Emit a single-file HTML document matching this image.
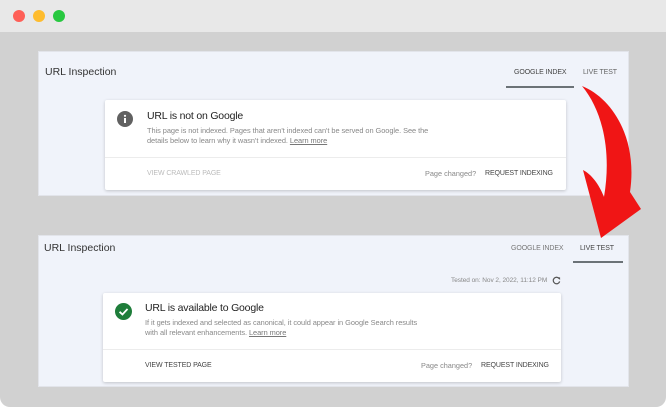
<!DOCTYPE html>
<html><head><style>
*{margin:0;padding:0;box-sizing:border-box}
body{width:666px;height:407px;background:#fff;font-family:"Liberation Sans",sans-serif;overflow:hidden;position:relative}
.win{position:absolute;left:0;top:0;width:666px;height:407px;background:#d1d1d1;border-radius:0 0 10px 10px;overflow:hidden}
.bar{position:absolute;left:0;top:0;width:666px;height:32px;background:#e8e8e8}
.dot{position:absolute;top:10px;width:12px;height:12px;border-radius:50%}
.panel{position:absolute;left:38px;width:591px;background:#f0f3fa;border:1px solid #e2e4ea}
.t{position:absolute;font-size:10.5px;color:#333}
.tab{position:absolute;font-size:7px;color:#555;letter-spacing:-.1px;line-height:9px}
.ul{position:absolute;height:2px;background:#6b7277}
.card{position:absolute;background:#fff;box-shadow:0 1px 3px rgba(0,0,0,.2);border-radius:2px}
.h{position:absolute;font-size:10.5px;color:#222;letter-spacing:-.2px}
.p{position:absolute;font-size:7.4px;color:#888;line-height:10px;letter-spacing:-.05px}
.p u{color:#777}
.div{position:absolute;left:0;right:0;height:1px;background:#ececec}
.btn{position:absolute;font-size:7px;color:#555;letter-spacing:-.1px;line-height:9px}
</style></head><body>
<div class="win">
<div class="bar"></div>
<div class="dot" style="left:13px;background:#fe5f57"></div>
<div class="dot" style="left:33px;background:#febc2e"></div>
<div class="dot" style="left:53px;background:#28c840"></div>

<div class="panel" style="top:51px;height:145px">
 <div class="t" style="left:6px;top:14px">URL Inspection</div>
 <div class="tab" style="left:475px;top:16px;color:#444">GOOGLE INDEX</div>
 <div class="tab" style="left:544px;top:16px;color:#666">LIVE TEST</div>
 <div class="ul" style="left:467px;top:34px;width:68px"></div>
 <div class="card" style="left:66px;top:48px;width:461px;height:90px">
  <svg style="position:absolute;left:12px;top:11px" width="16" height="16" viewBox="0 0 16 16"><circle cx="8" cy="8" r="8" fill="#616161"/><rect x="7" y="7" width="2" height="5" fill="#fff"/><circle cx="8" cy="4.8" r="1.1" fill="#fff"/></svg>
  <div class="h" style="left:42px;top:10px">URL is not on Google</div>
  <div class="p" style="left:42px;top:26px">This page is not indexed. Pages that aren't indexed can't be served on Google. See the<br>details below to learn why it wasn't indexed. <u>Learn more</u></div>
  <div class="div" style="top:57px"></div>
  <div class="btn" style="left:42px;top:69px;color:#bbb">VIEW CRAWLED PAGE</div>
  <div class="btn" style="left:320px;top:69px;color:#888;letter-spacing:0;font-size:7.3px">Page changed?</div>
  <div class="btn" style="left:380px;top:69px;color:#444">REQUEST INDEXING</div>
 </div>
</div>

<div class="panel" style="top:235px;height:152px">
 <div class="t" style="left:5px;top:6px">URL Inspection</div>
 <div class="tab" style="left:472px;top:8px;color:#777">GOOGLE INDEX</div>
 <div class="tab" style="left:541px;top:8px;color:#444">LIVE TEST</div>
 <div class="ul" style="left:534px;top:25px;width:50px"></div>
 <div class="p" style="left:412px;top:40px;font-size:6.5px">Tested on: Nov 2, 2022, 11:12 PM</div>
 <svg style="position:absolute;left:513px;top:40px" width="9" height="9" viewBox="0 0 10 10"><path d="M8 3A3.6 3.6 0 1 0 8.5 6" fill="none" stroke="#555" stroke-width="1.4"/><path d="M6 1.5L9 1.5L9 4.5Z" fill="#555"/></svg>
 <div class="card" style="left:64px;top:57px;width:458px;height:89px">
  <svg style="position:absolute;left:12px;top:10px" width="17" height="17" viewBox="0 0 16 16"><circle cx="8" cy="8" r="8" fill="#1e7d3a"/><path d="M4.3 8.3L7 10.8L11.8 5.6" fill="none" stroke="#fff" stroke-width="1.7"/></svg>
  <div class="h" style="left:42px;top:9px">URL is available to Google</div>
  <div class="p" style="left:42px;top:25px">If it gets indexed and selected as canonical, it could appear in Google Search results<br>with all relevant enhancements. <u>Learn more</u></div>
  <div class="div" style="top:56px"></div>
  <div class="btn" style="left:42px;top:68px;color:#444">VIEW TESTED PAGE</div>
  <div class="btn" style="left:318px;top:68px;color:#888;letter-spacing:0;font-size:7.3px">Page changed?</div>
  <div class="btn" style="left:378px;top:68px;color:#444">REQUEST INDEXING</div>
 </div>
</div>

<svg style="position:absolute;left:0;top:0" width="666" height="407"><path d="M582,86 C612,98 638,138 630,192 L641,209 L601,238 L583,170 C591,174 599,184 604,197 C612,150 602,110 582,86 Z" fill="#f01515"/></svg>
</div>
</body></html>
